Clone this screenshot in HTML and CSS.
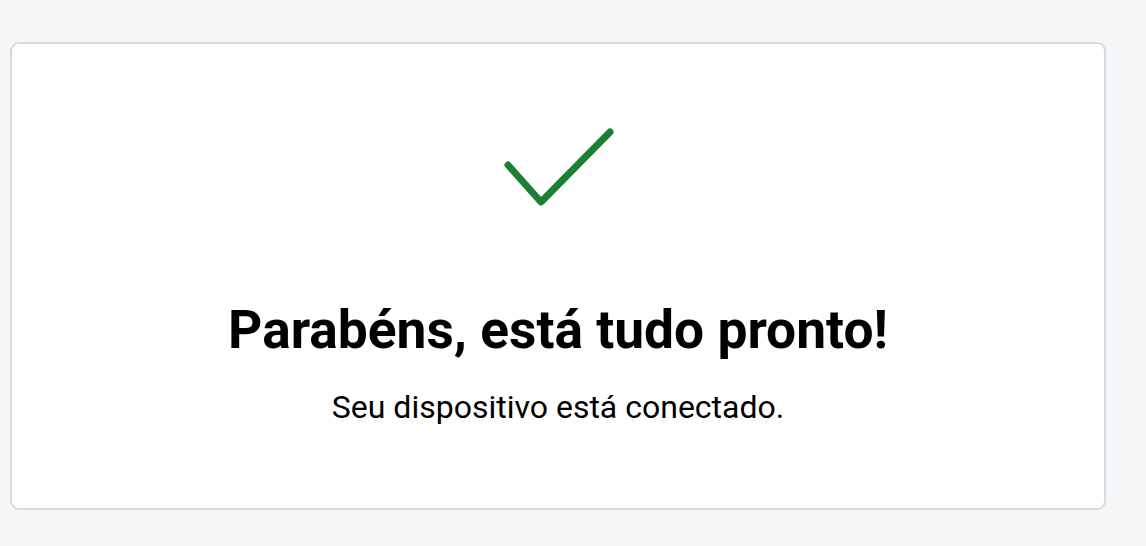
FILE: index.html
```html
<!DOCTYPE html>
<html lang="pt">
<head>
<meta charset="utf-8">
<title>Pronto</title>
<link rel="stylesheet" href="styles.css">
</head>
<body>
<main class="card">
  <svg class="check" width="110" height="80" viewBox="0 0 110 80" aria-hidden="true">
    <polyline points="4,37 37,74 106,4" fill="none" stroke="#1c7f37" stroke-width="7" stroke-linecap="round" stroke-linejoin="round"/>
  </svg>
  <h1 class="title">Parabéns, está tudo pronto!</h1>
  <p class="subtitle">Seu dispositivo está conectado.</p>
</main>
</body>
</html>
```
FILE: styles.css
```css
html, body {
  margin: 0;
  padding: 0;
  background: #f5f6f8;
}
body {
  padding: 42px 40px 36px 10px;
  font-family: Roboto, "Liberation Sans", sans-serif;
  color: #000;
}
.card {
  box-sizing: border-box;
  width: 1096px;
  height: 468px;
  background: #fff;
  border: 2px solid #d5dae1;
  border-radius: 9px;
  display: flex;
  flex-direction: column;
  align-items: center;
  padding-top: 84px;
}
.check {
  display: block;
  margin-left: 2px;
}
.title {
  margin: 92px 0 0;
  font-size: 53.3px;
  font-weight: 700;
  line-height: 60px;
}
.subtitle {
  margin: 27px 0 0;
  font-size: 32px;
  font-weight: 400;
  line-height: 40px;
}
```
